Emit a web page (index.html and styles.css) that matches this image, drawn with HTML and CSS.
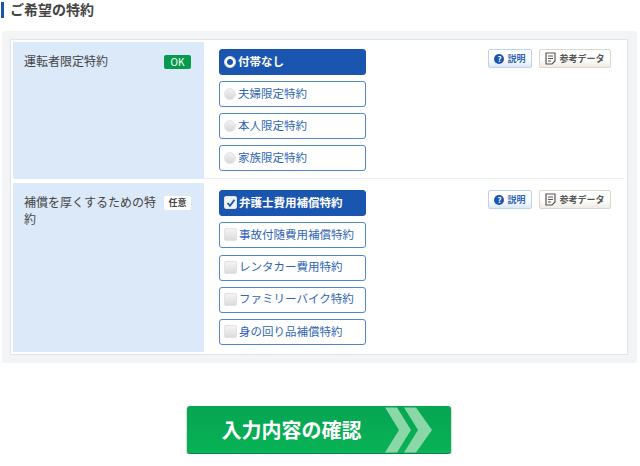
FILE: index.html
```html
<!DOCTYPE html>
<html lang="ja">
<head>
  <meta charset="UTF-8">
  <title>ご希望の特約</title>
  <link rel="stylesheet" href="styles.css">
</head>
<body>
  <h2 class="section-title">ご希望の特約</h2>

  <div class="panel">
    <div class="panel-inner">

      <div class="row">
        <div class="row-label">
          <span class="label-text">運転者限定特約</span>
          <span class="badge badge-ok">OK</span>
        </div>
        <div class="row-body">
          <div class="options">
            <div class="option selected"><span class="radio"></span>付帯なし</div>
            <div class="option"><span class="radio"></span>夫婦限定特約</div>
            <div class="option"><span class="radio"></span>本人限定特約</div>
            <div class="option"><span class="radio"></span>家族限定特約</div>
          </div>
          <div class="help-buttons">
            <a class="btn-help"><span class="help-icon">?</span>説明</a>
            <a class="btn-data">
              <svg class="data-icon" width="11" height="13" viewBox="0 0 11 13"><path d="M1 1h9v8l-3 3h-6z M3 4h5 M3 6.500h5 M3 9h3" fill="none" stroke="#555" stroke-width="1.200"/></svg>参考データ
            </a>
          </div>
        </div>
      </div>

      <div class="row row-second">
        <div class="row-label">
          <span class="label-text">補償を厚くするための特約</span>
          <span class="badge badge-any">任意</span>
        </div>
        <div class="row-body">
          <div class="options">
            <div class="option selected"><span class="check checked"><svg width="10" height="10" viewBox="0 0 10 10"><path d="M1.500 5l2.500 2.800 4.500-6" fill="none" stroke="#1a56b0" stroke-width="1.800"/></svg></span>弁護士費用補償特約</div>
            <div class="option"><span class="check"></span>事故付随費用補償特約</div>
            <div class="option"><span class="check"></span>レンタカー費用特約</div>
            <div class="option"><span class="check"></span>ファミリーバイク特約</div>
            <div class="option"><span class="check"></span>身の回り品補償特約</div>
          </div>
          <div class="help-buttons">
            <a class="btn-help"><span class="help-icon">?</span>説明</a>
            <a class="btn-data">
              <svg class="data-icon" width="11" height="13" viewBox="0 0 11 13"><path d="M1 1h9v8l-3 3h-6z M3 4h5 M3 6.500h5 M3 9h3" fill="none" stroke="#555" stroke-width="1.200"/></svg>参考データ
            </a>
          </div>
        </div>
      </div>

    </div>
  </div>

  <div class="submit-wrap">
    <a class="btn-submit">
      入力内容の確認
      <svg class="chevrons" width="48" height="46" viewBox="0 0 48 46"><path d="M0 0.500h12l14 22.500-14 22.500h-12l14-22.500z M19 0.500h12l16 22.500-16 22.500h-12l14-22.500z" fill="#8ad8a8"/></svg>
    </a>
  </div>
</body>
</html>
```

FILE: styles.css
```css
body {
  margin: 0;
  background-color: #fff;
  font-family: "Noto Sans CJK JP", "Liberation Sans", sans-serif;
  color: #444;
}
.section-title {
  margin: 2px 0 0 1px;
  padding-left: 6px;
  height: 16px;
  line-height: 15px;
  font-size: 14px;
  font-weight: bold;
  color: #444;
  border-left: 3px solid #1a56b0;
}
.panel {
  margin: 13px 3px 0 2px;
  padding: 8px;
  height: 316px;
  background-color: #f3f4f6;
  border-radius: 3px;
}
.panel-inner {
  width: 612px;
  height: 310px;
  padding: 2px;
  background-color: #fff;
  border: 1px solid #e2e4e8;
}
.row {
  display: flex;
  height: 137px;
}
.row-second {
  height: 169px;
  margin-top: 4px;
}
.row-label {
  display: flex;
  justify-content: space-between;
  align-items: flex-start;
  width: 191px;
  padding: 10px 13px 0 11px;
  box-sizing: border-box;
  background-color: #dce9f9;
}
.label-text {
  width: 134px;
  font-size: 12px;
  line-height: 18px;
  color: #444;
}
.row-second .label-text {
  line-height: 17px;
}
.badge {
  flex: none;
  margin-top: 3px;
  width: 27px;
  height: 14px;
  line-height: 14px;
  border-radius: 2px;
  font-size: 9px;
  text-align: center;
}
.badge-ok {
  background-color: #069a4c;
  color: #fff;
  font-size: 10px;
}
.badge-any {
  background-color: #fff;
  color: #444;
  font-weight: bold;
}
.row-body {
  flex: 1;
  display: flex;
  justify-content: space-between;
  padding: 7px 14px 0 15px;
  border-bottom: 1px solid #eef0f3;
}
.row-second .row-body {
  border-bottom: 0;
}
.options {
  display: flex;
  flex-direction: column;
  gap: 6px;
}
.row-second .options {
  gap: 6.250px;
}
.option {
  display: flex;
  align-items: center;
  gap: 2px;
  width: 147px;
  height: 26px;
  padding: 0 0 2px 4px;
  box-sizing: border-box;
  border: 1px solid #4f86cc;
  border-radius: 3px;
  background-color: #fff;
  color: #2f66b5;
  font-size: 11.500px;
}
.row-second .option {
  padding-bottom: 3px;
}
.option.selected {
  background-color: #1a56b0;
  border-color: #1a56b0;
  color: #fff;
  font-weight: bold;
}
.radio {
  width: 12px;
  height: 12px;
  margin-top: 2px;
  border-radius: 50%;
  background: linear-gradient(#f2f2f2, #d8d8d8);
  border: 1px solid #e4e4e4;
  box-sizing: border-box;
}
.selected .radio {
  background: radial-gradient(circle, #1a56b0 0 2.500px, #fff 3.500px);
}
.check {
  display: flex;
  align-items: center;
  justify-content: center;
  width: 13px;
  height: 13px;
  margin-top: 2px;
  border-radius: 2px;
  background: linear-gradient(#f4f4f4, #dcdcdc);
  border: 1px solid #e2e2e2;
  box-sizing: border-box;
}
.check.checked {
  background: #eef2f8;
}
.help-buttons {
  display: flex;
  align-items: flex-start;
  gap: 7px;
}
.btn-help, .btn-data {
  display: flex;
  align-items: center;
  justify-content: center;
  height: 19px;
  box-sizing: border-box;
  border-radius: 2px;
  font-size: 9px;
  font-weight: bold;
  white-space: nowrap;
}
.btn-help {
  width: 44px;
  gap: 3px;
  border: 1px solid #bcd3ee;
  background: linear-gradient(#fff 50%, #dce8f6);
  color: #2f66b5;
}
.help-icon {
  width: 10px;
  height: 10px;
  line-height: 10px;
  border-radius: 50%;
  background-color: #1a56b0;
  color: #fff;
  font-size: 8px;
  text-align: center;
}
.btn-data {
  width: 72px;
  gap: 3px;
  border: 1px solid #ddd6cc;
  background: linear-gradient(#fff 50%, #efece6);
  color: #555;
}
.submit-wrap {
  display: flex;
  justify-content: center;
  margin-top: 43px;
  padding-right: 3px;
}
.btn-submit {
  display: flex;
  align-items: center;
  position: relative;
  width: 264px;
  height: 48px;
  padding-left: 35px;
  box-sizing: border-box;
  border-radius: 3px;
  background: linear-gradient(#06a552, #08b255);
  border-bottom: 1px solid #078a45;
  box-shadow: 0 1px 2px rgba(0, 0, 0, 0.5);
  color: #fff;
  font-size: 20px;
  font-weight: bold;
}
.chevrons {
  position: absolute;
  top: 1px;
  left: 198px;
}
```
